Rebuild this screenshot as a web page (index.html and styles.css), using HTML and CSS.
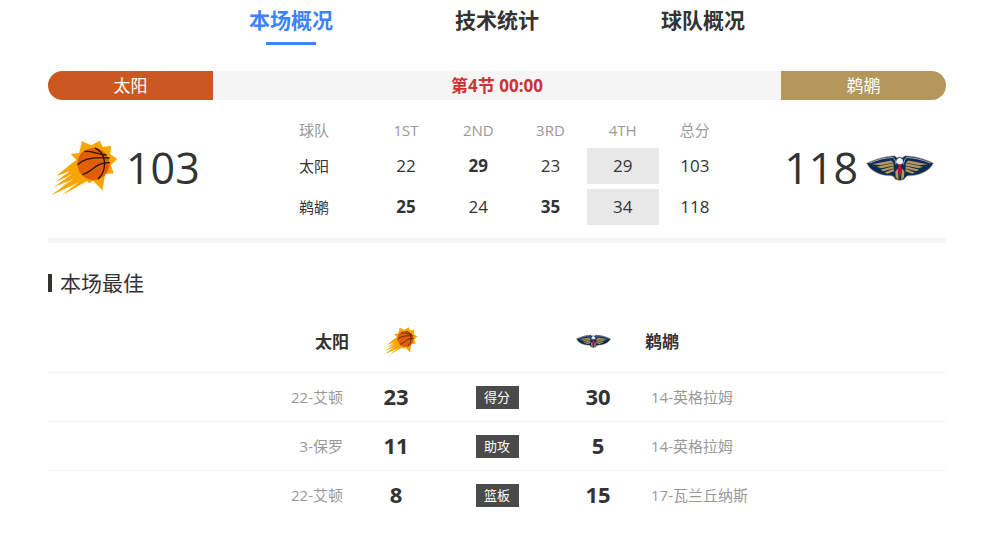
FILE: index.html
```html
<!DOCTYPE html>
<html lang="zh-CN">
<head>
    <meta charset="UTF-8">
    <meta name="viewport" content="width=device-width, initial-scale=1.0">
    <title>太阳 103 - 118 鹈鹕</title>
    <link rel="stylesheet" href="styles.css">
</head>
<body>
    <!-- 球队标志 -->
    <svg class="symbols" aria-hidden="true">
        <symbol id="suns" viewBox="32 30 200 168">
            <path fill="#f7a600" d="M124 34 L152 46 L178 32 L187 51 L212 47 L209 72 L230 87 L211 106 L220 130 L194 132 L186 181 L158 153 L146 160 L140 153 L64 196 L106 161 L34 195 L84 153 L38 172 L86 138 L44 156 L88 124 L48 138 L92 101 L108 90 L91 72 L116 69 Z"/>
            <path fill="none" stroke="#fff" stroke-width="2" d="M54 144 L84 124 M46 165 L90 134 M46 184 L96 148 M76 184 L112 158"/>
            <circle cx="159" cy="102" r="48" fill="#e05f06"/>
            <path fill="#c9530d" d="M112 94 A48 48 0 0 1 140 58 C128 68 120 80 112 94 Z"/>
            <g fill="none" stroke="#2a1508" stroke-width="4">
                <path d="M132 65 C148 60 170 73 198 75"/>
                <path d="M111 104 C130 84 165 80 207 84"/>
                <path d="M126 134 C158 124 165 96 208 98"/>
                <path d="M163 54 C196 66 204 118 172 148"/>
            </g>
        </symbol>
        <symbol id="pelicans" viewBox="256 72 204 80">
            <path fill="#0c2a56" stroke="#b9a877" stroke-width="2" d="M258 99 C286 86 315 78 342 77 L349 83 L357 80 L365 83 L373 77 C402 78 432 86 458 99 C446 124 416 136 384 137 C378 137 374 142 371 147 L357 151 L343 147 C341 141 337 137 330 137 C298 136 270 124 258 99 Z"/>
            <g fill="none" stroke="#dfe4ec" stroke-width="2">
                <path d="M266 99 C292 88 314 83 336 82 C344 84 344 96 346 103"/>
                <path d="M450 99 C424 88 400 83 379 82 C371 84 371 96 368 103"/>
            </g>
            <g fill="#b4975a">
                <path d="M273 102 L332 91 L338 98 L300 105 Z M287 110 L338 99 L340 106 L302 114 Z M299 119 L338 108 L340 114 L309 123 Z M312 127 L339 116 L340 123 L320 131 Z"/>
                <path d="M442 102 L383 91 L376 98 L415 105 Z M428 110 L376 99 L374 106 L413 114 Z M416 119 L376 108 L374 114 L406 123 Z M402 127 L375 116 L374 123 L395 131 Z"/>
                <path d="M344 124 L351 115 L354 148 L345 142 Z M371 124 L364 115 L361 148 L370 142 Z"/>
            </g>
            <path fill="#e8edf4" d="M348 88 L357 82 L366 88 L368 97 L361 103 L354 103 L346 97 Z"/>
            <path fill="#c8102e" d="M353 103 L361 103 L363 120 L357 145 L352 120 Z"/>
        </symbol>
    </svg>

    <div class="page">
        <nav class="tabs">
            <a href="#overview" class="tab active">本场概况</a>
            <a href="#stats" class="tab">技术统计</a>
            <a href="#teams" class="tab">球队概况</a>
        </nav>

        <div class="status-bar">
            <span class="team-tag away">太阳</span>
            <span class="status">第4节 00:00</span>
            <span class="team-tag home">鹈鹕</span>
        </div>

        <section class="scoreboard" id="overview">
            <div class="team">
                <svg class="logo-suns" role="img" aria-label="太阳"><use href="#suns"/></svg>
                <span class="score">103</span>
            </div>
            <table class="quarters">
                <thead>
                    <tr><th class="name">球队</th><th>1ST</th><th>2ND</th><th>3RD</th><th>4TH</th><th>总分</th></tr>
                </thead>
                <tbody>
                    <tr><td class="name">太阳</td><td>22</td><td class="win">29</td><td>23</td><td class="current">29</td><td>103</td></tr>
                    <tr><td class="name">鹈鹕</td><td class="win">25</td><td>24</td><td class="win">35</td><td class="current">34</td><td>118</td></tr>
                </tbody>
            </table>
            <div class="team team-right">
                <span class="score">118</span>
                <svg class="logo-pelicans" role="img" aria-label="鹈鹕"><use href="#pelicans"/></svg>
            </div>
        </section>

        <h2 class="title">本场最佳</h2>
        <table class="best">
            <colgroup>
                <col><col class="col-num"><col class="col-label"><col class="col-num"><col>
            </colgroup>
            <thead>
                <tr>
                    <th class="left">太阳</th>
                    <th class="logo-left"><svg class="logo-suns" aria-hidden="true"><use href="#suns"/></svg></th>
                    <th></th>
                    <th class="logo-right"><svg class="logo-pelicans" aria-hidden="true"><use href="#pelicans"/></svg></th>
                    <th class="right">鹈鹕</th>
                </tr>
            </thead>
            <tbody>
                <tr>
                    <td class="left">22-艾顿</td>
                    <td class="num">23</td>
                    <td><span class="label">得分</span></td>
                    <td class="num">30</td>
                    <td class="right">14-英格拉姆</td>
                </tr>
                <tr>
                    <td class="left">3-保罗</td>
                    <td class="num">11</td>
                    <td><span class="label">助攻</span></td>
                    <td class="num">5</td>
                    <td class="right">14-英格拉姆</td>
                </tr>
                <tr>
                    <td class="left">22-艾顿</td>
                    <td class="num">8</td>
                    <td><span class="label">篮板</span></td>
                    <td class="num">15</td>
                    <td class="right">17-瓦兰丘纳斯</td>
                </tr>
            </tbody>
        </table>
    </div>
</body>
</html>
```
FILE: styles.css
```css
body {
    margin: 0;
    background-color: #fff;
    color: #333;
    font-family: "Open Sans", "Noto Sans CJK SC", sans-serif;
    font-size: 15px;
}
.symbols {
    display: none;
}
.page {
    padding: 0 54px 16px 48px;
}

/* 标签页 */
.tabs {
    display: flex;
    justify-content: center;
}
.tab {
    width: 206px;
    color: #333;
    font-size: 21px;
    font-weight: 700;
    line-height: 40px;
    text-align: center;
    text-decoration: none;
}
.tab::after {
    content: "";
    display: block;
    width: 50px;
    height: 3px;
    margin: 2px auto 0;
}
.tab.active {
    color: #3e82ff;
}
.tab.active::after {
    background-color: #3e82ff;
}

.status-bar {
    display: flex;
    margin-top: 26px;
    border-radius: 15px;
    overflow: hidden;
    background-color: #f5f5f5;
    font-size: 17px;
    line-height: 29px;
    text-align: center;
}
.team-tag {
    width: 165px;
    color: #fff;
}
.away {
    background-color: #cb5821;
}
.home {
    background-color: #b4975a;
}
.status {
    flex: 1;
    color: #cc3333;
    font-weight: 700;
}

.scoreboard {
    display: grid;
    grid-template-columns: 210px 1fr 210px;
    align-items: center;
    padding: 13px 0 8px;
    border-bottom: 5px solid #f5f5f5;
}
.team {
    display: flex;
    align-items: center;
    gap: 8px;
    padding: 0 0 8px 3px;
}
.team-right {
    justify-content: flex-end;
    padding: 0 12px 8px 0;
}
.score {
    font-size: 43px;
    line-height: 56px;
}
.logo-suns {
    width: 67px;
    height: 56px;
}
.logo-pelicans {
    width: 68px;
    height: 27px;
}

.quarters {
    border-collapse: separate;
    border-spacing: 0 5px;
    table-layout: fixed;
    width: 473px;
}
.quarters th,
.quarters td {
    padding: 0;
    text-align: center;
}
.quarters th {
    height: 25px;
    color: #999;
    font-weight: 400;
    line-height: 25px;
}
.quarters td {
    height: 36px;
    font-size: 17px;
    line-height: 36px;
}
.quarters .name {
    width: 112px;
    font-size: 15px;
}
.quarters .win {
    font-weight: 700;
}
.quarters .current {
    background-color: #e8e8e8;
}

.title {
    display: flex;
    align-items: center;
    gap: 8px;
    margin: 24px 0 0;
    font-size: 21px;
    font-weight: 400;
    line-height: 32px;
}
.title::before {
    content: "";
    width: 4px;
    height: 18px;
    background-color: #333;
}

.best {
    width: 100%;
    margin-top: 11px;
    border-collapse: collapse;
    table-layout: fixed;
}
.col-num {
    width: 90px;
}
.col-label {
    width: 112px;
}
.best th,
.best td {
    height: 46px;
    padding: 0;
    text-align: center;
}
.best th {
    height: 60px;
    font-size: 17px;
}
.best tbody tr {
    border-top: 1px solid #f0f4f8;
}
.best td {
    color: #999;
}
.best .left {
    padding: 0 8px 2px 0;
    text-align: right;
}
.best .right {
    padding: 0 0 2px 8px;
    text-align: left;
}
.best th.left {
    padding-right: 2px;
}
.best th.right {
    padding-left: 2px;
}
.best .logo-left {
    padding-left: 10px;
}
.best .logo-right {
    padding-right: 10px;
}
.best svg {
    display: block;
    margin: 0 auto;
}
.best .logo-suns {
    width: 34px;
    height: 28px;
}
.best .logo-pelicans {
    width: 35px;
    height: 14px;
}
.best .num {
    padding-bottom: 2px;
    color: #333;
    font-size: 22px;
    font-weight: 700;
    line-height: 30px;
}
.label {
    display: inline-block;
    width: 43px;
    background-color: #4a4a4a;
    color: #fff;
    font-size: 13px;
    line-height: 23px;
}
```
